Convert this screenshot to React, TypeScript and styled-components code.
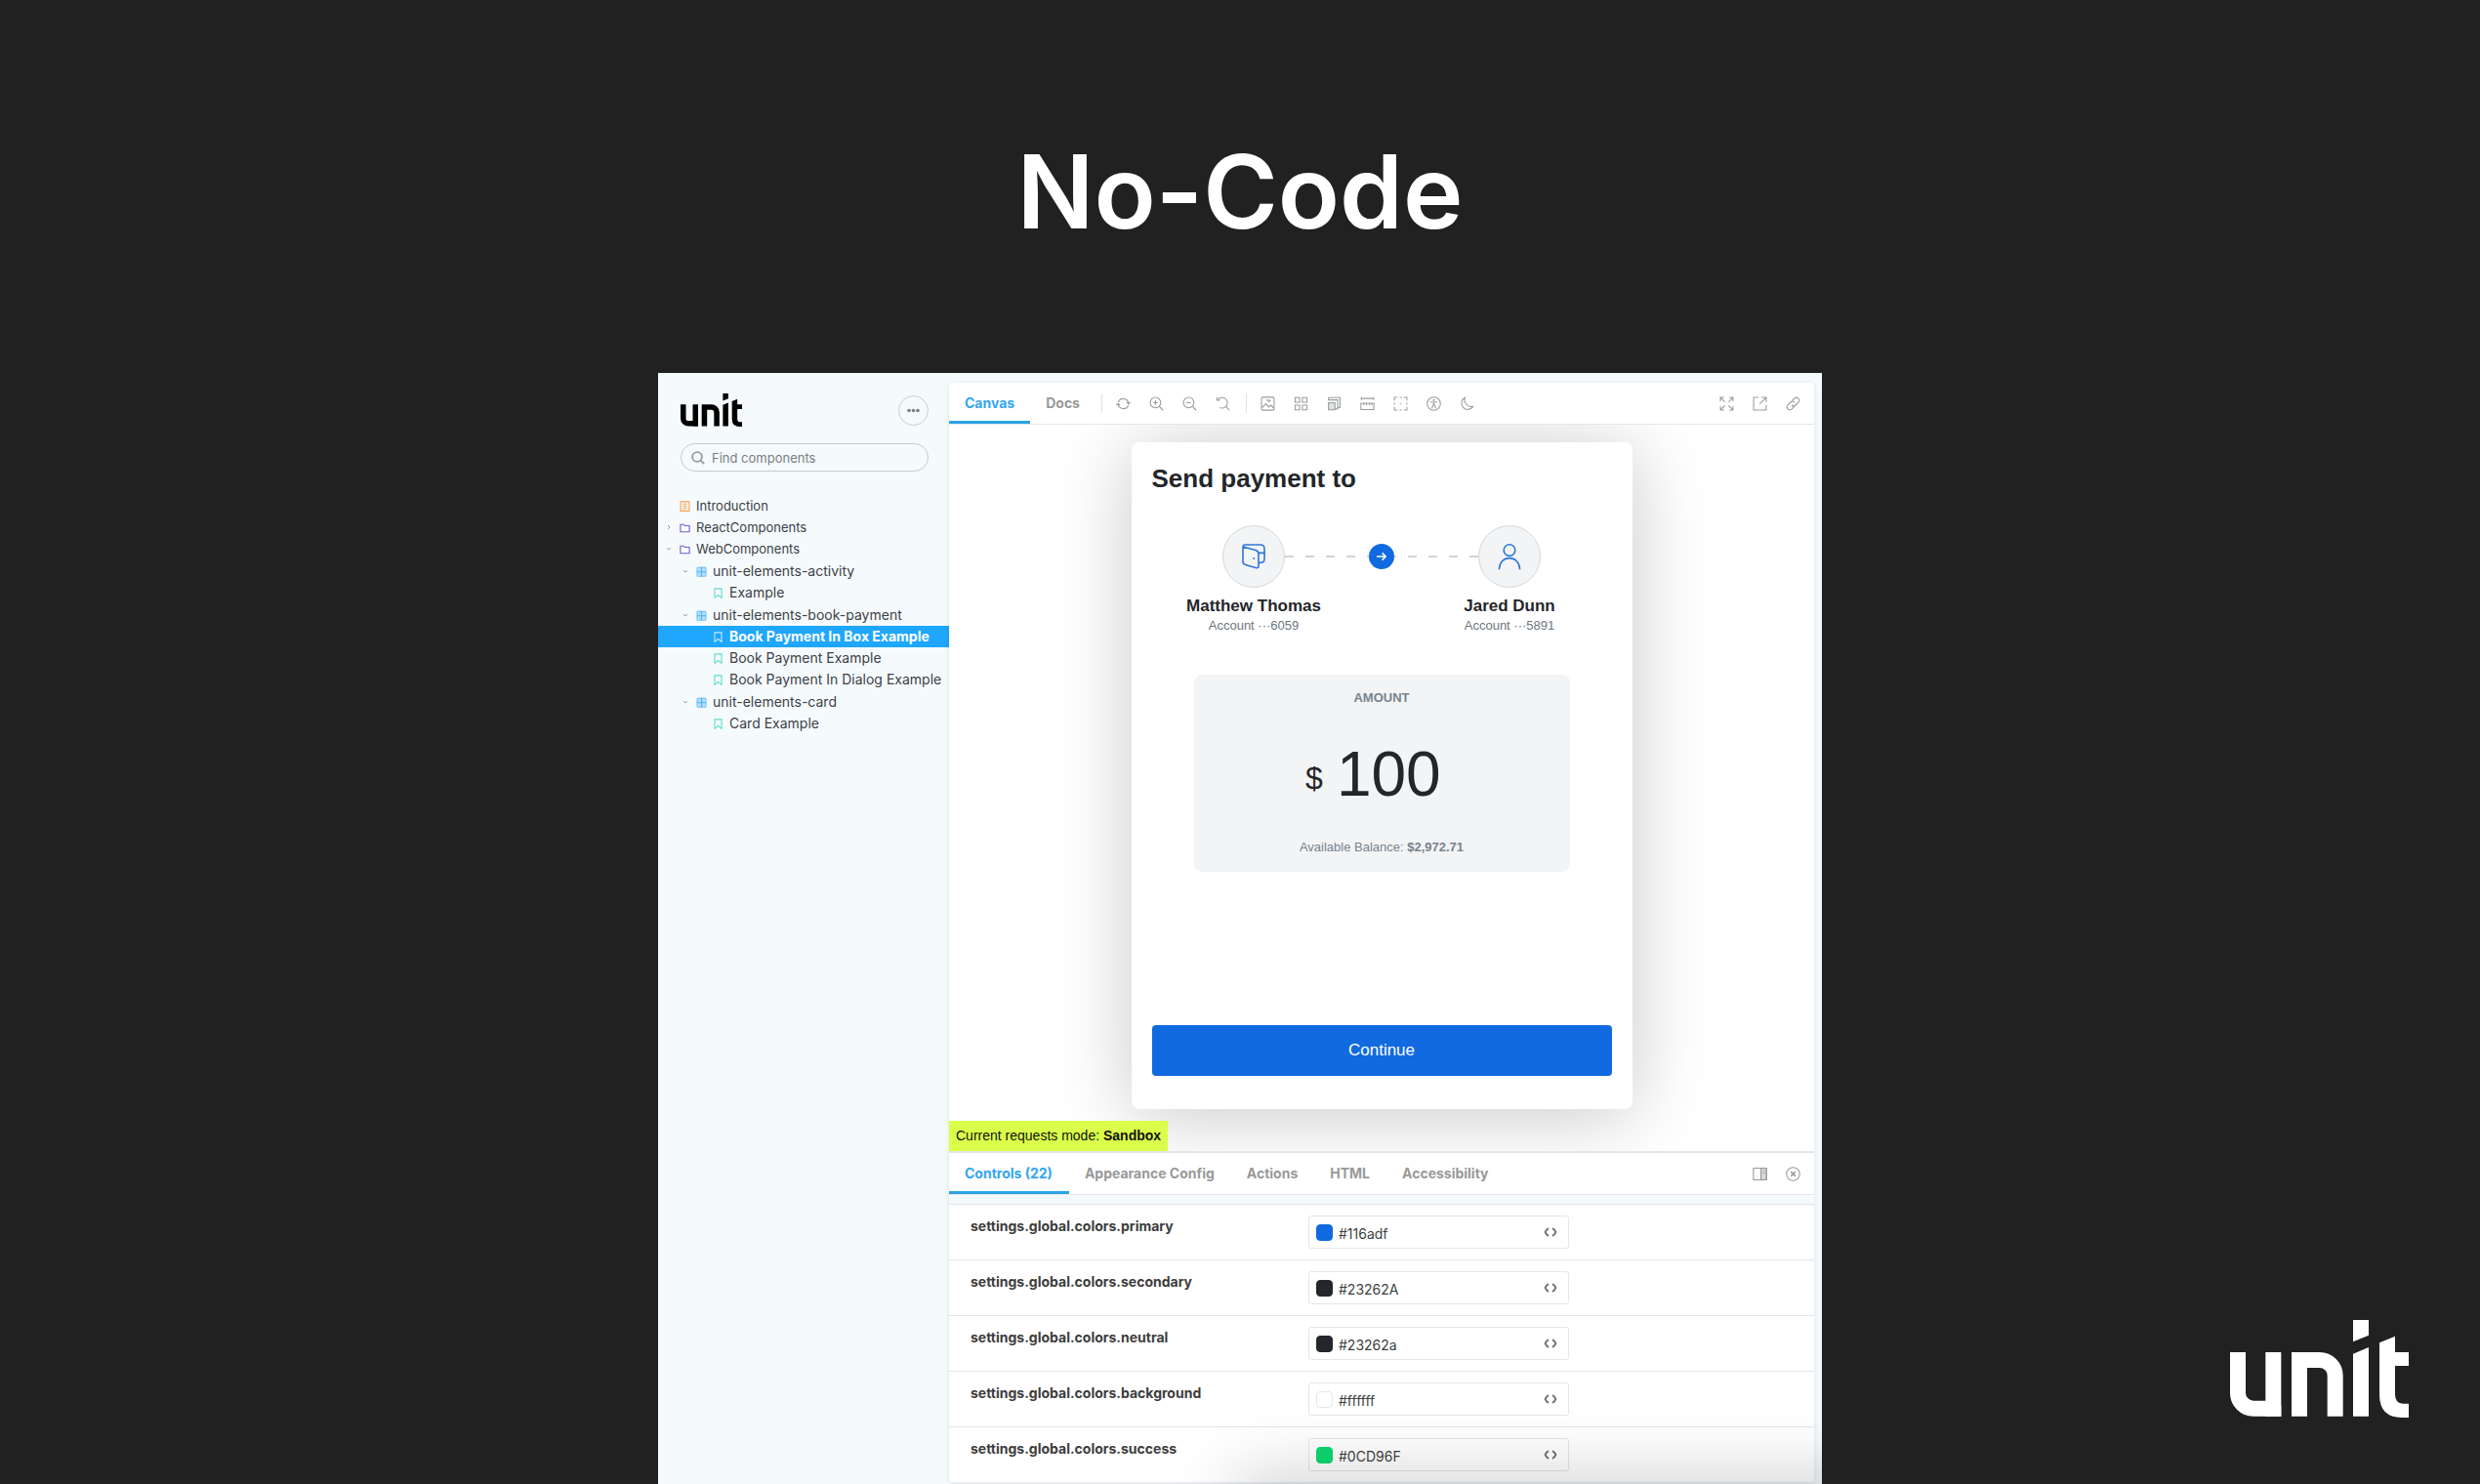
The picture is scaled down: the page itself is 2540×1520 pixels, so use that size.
import React, { useState } from "react";
import styled, { createGlobalStyle, css } from "styled-components";

const ui = `Inter, "Noto Sans", sans-serif`;
const arial = `"Liberation Sans", Arial, sans-serif`;

const Global = createGlobalStyle`
  *, *::before, *::after { box-sizing: border-box; }
  body { margin: 0; background: #212121; font-family: ${ui}; }
  button, input { font: inherit; color: inherit; margin: 0; padding: 0; border: 0; background: none; }
  button { cursor: pointer; }
  ul { list-style: none; margin: 0; padding: 0; }
  h1, h2, p { margin: 0; }
  svg { display: block; flex: none; }
`;

const Page = styled.main`
  position: relative;
  display: flex;
  flex-direction: column;
  align-items: center;
  height: 100vh;
  overflow: hidden;
  background: #212121;
`;

const Title = styled.h1`
  padding: 132px 0 122px;
  color: #fff;
  font-size: 104px;
  font-weight: 600;
  line-height: 128px;
`;

const CornerLogo = styled.div`
  position: absolute;
  right: 73px;
  bottom: 68px;
  color: #fff;
`;

const Workspace = styled.section`
  position: relative;
  display: grid;
  grid-template-columns: 298px 1fr;
  width: min(100%, 1192px);
  flex: 1;
  overflow: hidden;
  background: #f5fafd;

  &::after {
    content: "";
    position: absolute;
    top: 100%;
    left: 50%;
    right: -80px;
    height: 40px;
    box-shadow: 0 0 70px 4px rgba(0, 0, 0, 0.24);
    pointer-events: none;
  }
`;

/* ---------- sidebar ---------- */

const Sidebar = styled.aside`
  padding-top: 21px;
`;

const Brand = styled.div`
  display: flex;
  justify-content: space-between;
  align-items: center;
  padding: 0 21px 0 23px;
`;

const MoreButton = styled.button`
  display: grid;
  place-items: center;
  width: 31px;
  height: 31px;
  border: 1px solid #c9cfd3;
  border-radius: 50%;
  color: #7a7f83;
`;

const Search = styled.label`
  display: flex;
  align-items: center;
  gap: 7px;
  height: 29px;
  margin: 17px 21px 24px 23px;
  padding: 0 10px;
  border: 1px solid #c6cbcf;
  border-radius: 15px;
  color: #969a9d;
`;

const SearchInput = styled.input`
  flex: 1;
  min-width: 0;
  font-size: 13px;
  outline: 0;
  &::placeholder { color: #7a7e82; opacity: 1; }
`;

const Group = styled.ul`
  margin-top: 1px;
`;

const Node = styled.a<{ $level: number; $active?: boolean }>`
  display: grid;
  grid-template-columns: 10px 11px 1fr;
  column-gap: 4px;
  align-items: center;
  height: 22px;
  padding-left: ${(p) => 8 + p.$level * 17}px;
  color: #3c4146;
  font-size: ${(p) => (p.$level ? 14 : 13)}px;
  line-height: 22px;
  text-decoration: none;
  white-space: nowrap;
  ${(p) => p.$active && css`background: #1ea7fd; color: #fff; font-weight: 700;`}
`;

const NodeText = styled.span`
  padding-left: 2px;
`;

/* ---------- preview ---------- */

const Preview = styled.div`
  display: flex;
  flex-direction: column;
  min-width: 0;
  margin: 10px 8px 2px 0;
  border-radius: 4px;
  background: #fff;
  box-shadow: 0 1px 5px rgba(0, 0, 0, 0.1);
  overflow: hidden;
`;

const Bar = styled.div<{ $top?: boolean }>`
  display: flex;
  justify-content: space-between;
  height: ${(p) => (p.$top ? 45 : 43)}px;
  flex: none;
  border-bottom: 1px solid #e4e6e7;
  ${(p) => p.$top && css`border-top: 2px solid #e4e6e7;`}
  background: #fff;
`;

const BarSide = styled.div<{ $end?: boolean }>`
  display: flex;
  align-items: center;
  ${(p) => p.$end && css`padding-right: 5px;`}
`;

const Tab = styled.button<{ $on?: boolean; $wide?: boolean }>`
  height: 100%;
  padding: 2px ${(p) => (p.$wide ? 17 : 16)}px 0 16px;
  border-bottom: 3px solid ${(p) => (p.$on ? "#2ba3e4" : "transparent")};
  color: ${(p) => (p.$on ? "#33a6f0" : "#999")};
  font-size: 14px;
  font-weight: 700;
  white-space: nowrap;
`;

const Divider = styled.span`
  width: 1px;
  height: 20px;
  margin: 0 5px 0 6px;
  background: #dfe1e2;
`;

const Tool = styled.button`
  display: grid;
  place-items: center;
  width: 34px;
  height: 34px;
  color: #989b9d;
`;

const Canvas = styled.div`
  position: relative;
  display: flex;
  justify-content: center;
  flex: none;
  padding: 18px 16px 43px;
  overflow: hidden;
`;

const ModeBadge = styled.p`
  position: absolute;
  left: 0;
  bottom: 0;
  padding: 0 7px;
  background: #daff4a;
  color: #111;
  font: 14px / 31px ${arial};
`;

const Card = styled.form`
  width: 513px;
  padding: 22px 21px 34px;
  border-radius: 8px;
  background: #fff;
  box-shadow: 0 6px 80px rgba(0, 0, 0, 0.22);
  color: #23262a;
  font-family: ${arial};
`;

const CardTitle = styled.h2`
  font-size: 26px;
  line-height: 30px;
`;

const Route = styled.div`
  display: flex;
  justify-content: center;
  align-items: center;
  margin-top: 33px;
`;

const Avatar = styled.span`
  display: grid;
  place-items: center;
  width: 64px;
  height: 64px;
  border: 1px solid #d5d8da;
  border-radius: 50%;
  background: #f2f4f6;
  color: #2f75d6;
`;

const Connector = styled.span`
  display: flex;
  justify-content: center;
  align-items: center;
  width: 198px;
  height: 26px;
  background: repeating-linear-gradient(to right, #d2d4d6 0 9px, transparent 9px 21px) center / 100% 2px no-repeat;
`;

const Arrow = styled.span`
  display: grid;
  place-items: center;
  width: 26px;
  height: 26px;
  border-radius: 50%;
  background: #116adf;
  color: #fff;
`;

const People = styled.div`
  display: flex;
  justify-content: center;
  gap: 102px;
  margin-top: 8px;
  text-align: center;
`;

const Person = styled.div`
  width: 160px;
`;

const PersonName = styled.p`
  font-size: 17px;
  font-weight: 700;
  line-height: 22px;
`;

const Account = styled.p`
  color: #6b7680;
  font-size: 13px;
  line-height: 18px;
`;

const AmountBox = styled.div`
  display: flex;
  flex-direction: column;
  align-items: center;
  margin: 41px 43px 157px;
  padding: 16px 0 17px;
  border-radius: 8px;
  background: #f2f4f6;
  color: #78838d;
  font-size: 13px;
  line-height: 16px;
`;

const AmountLabel = styled.label`
  font-weight: 700;
`;

const AmountRow = styled.div`
  display: flex;
  align-items: center;
  gap: 14px;
  margin: 34px 0 31px;
  color: #23262a;
`;

const Currency = styled.span`
  padding-top: 8px;
  font-size: 32px;
  line-height: 36px;
`;

const AmountInput = styled.input`
  width: 124px;
  height: 72px;
  font-size: 64px;
  line-height: 72px;
  outline: 0;
`;

const Continue = styled.button`
  display: block;
  width: 100%;
  height: 52px;
  border-radius: 4px;
  background: #116adf;
  color: #fff;
  font-size: 17px;
`;

/* ---------- controls ---------- */

const Controls = styled.div`
  margin-top: 9px;
  background: #fff;
`;

const ControlsArea = styled.div`
  flex: 1;
  background: #f5fafd;
`;

const ControlRow = styled.div`
  display: grid;
  grid-template-columns: 346px 267px;
  height: 57px;
  padding: 11px 22px;
  border-top: 1px solid #e2e4e5;
`;

const ControlLabel = styled.label`
  color: #3d3d3d;
  font-size: 14px;
  font-weight: 700;
  line-height: 22px;
`;

const Field = styled.div`
  display: flex;
  align-items: center;
  height: 34px;
  padding: 0 5px 0 7px;
  border: 1px solid #e4e6e8;
  border-radius: 3px;
  color: #3c3f42;
`;

const Swatch = styled.button<{ $color: string; $light?: boolean }>`
  width: 17px;
  height: 17px;
  flex: none;
  border: 1px solid ${(p) => (p.$light ? "#e4e6e8" : p.$color)};
  border-radius: 4px;
  background: ${(p) => p.$color};
`;

const FieldInput = styled.input`
  flex: 1;
  min-width: 0;
  padding: 2px 0 0 6px;
  font-size: 14px;
  outline: 0;
`;

const CodeButton = styled.button`
  display: grid;
  place-items: center;
  width: 26px;
  height: 26px;
  color: #6f7478;
`;

/* ---------- drawings ---------- */

const Logo = ({ width, height }: { width: number; height: number }) => (
  <svg width={width} height={height} viewBox="72 66 549 300" preserveAspectRatio="none" role="img" aria-label="unit">
    <g fill="none" stroke="currentColor" strokeWidth="48">
      <path d="M96 165V290A48 48 0 0 0 144 338H205V165" />
      <path d="M205 330V362M285 362V189H347A48 48 0 0 1 395 237V362M285 165V200" />
    </g>
    <g fill="currentColor">
      <path d="M450 66h48v47l-48 20zM450 170l48-20v212h-48z" />
      <path d="M531 136l48-20v49h42v42h-42v88q0 28 24 28h18v43h-21q-69 0-69-71z" />
    </g>
  </svg>
);

const shapes: Record<string, React.ReactNode> = {
  sync: (
    <>
      <path d="M2.1 5.6A5.2 5.2 0 0 1 12.1 6.6M11.9 8.4A5.2 5.2 0 0 1 1.9 7.4" />
      <path d="M.2 8.6 1.9 6.8 3.8 8.4M10.2 5.6l1.9 1.6 1.7-1.8" />
    </>
  ),
  zoomin: <><circle cx="6" cy="6" r="5" /><path d="M9.7 9.7 13.3 13.3M6 3.8v4.4M3.8 6h4.4" /></>,
  zoomout: <><circle cx="6" cy="6" r="5" /><path d="M9.7 9.7 13.3 13.3M3.8 6h4.4" /></>,
  zoomreset: <><path d="M2.3 3.2A5 5 0 1 1 4 10.6M1.2.8v3h3M9.9 9.7l3.4 3.6" /></>,
  photo: <><rect x="1" y=".8" width="12" height="12.4" rx="1" /><path d="M1.2 11 5 7l3 3 2-1.6 2.8 2.8M5.8 4.2a1.2 1.2 0 1 1 1.8 1.4M8 5l2-1.6" /></>,
  grid: <path d="M1.3 1.2h4.4v4.4H1.3zM8.3 1.2h4.4v4.4H8.3zM1.3 8.4h4.4v4.4H1.3zM8.3 8.4h4.4v4.4H8.3z" />,
  grow: <><path d="M1.5 1.2h11v9.6h-2M1.5 3.4h8.8v8.6H8M1.5 1v3" /><path d="M1.5 6h6.2v6.8H1.5z" fill="currentColor" fillOpacity=".3" /></>,
  ruler: <><path d="M.8 2h12.4M1.2.6v2.8M12.8.6v2.8M.8 6.6h12.4v6H.8zM3.6 6.6v2M6.2 6.6v2M8.8 6.6v2M11.2 6.6v2" /></>,
  outline: <><path d="M4 1H1v3M10 1h3v3M1 10v3h3M13 10v3h-3M6 1h2M6 13h2M1 6v2M13 6v2M6.4 7h1.2" /></>,
  access: <><circle cx="7" cy="7" r="6.3" /><circle cx="7" cy="3.6" r=".5" fill="currentColor" /><path d="M3.8 5.2 7 5.8l3.2-.6M7 5.8V8M5.2 11.4 6.6 7.6M8.8 11.4 7.4 7.6" /></>,
  moon: <path d="M5 1.2A6 6 0 1 0 12.8 9.8 6.8 6.8 0 0 1 5 1.2z" />,
  expand: <path d="M1 4.6V1h3.6M1.2 1.2 5.2 5.2M9.4 1H13v3.6M12.8 1.2l-4 4M1 9.4V13h3.6M1.2 12.8l4-4M9.4 13H13V9.4M12.8 12.8l-4-4" />,
  share: <path d="M5.6 1H1v12h12V8.4M8.4 1H13v4.4M12.8 1.2 6.8 7.2" />,
  link: <><path d="M6 4.2 8.4 1.8a2.7 2.7 0 0 1 3.8 3.8L9.4 8.4a2.7 2.7 0 0 1-3.8 0" /><path d="M8 9.8 5.6 12.2a2.7 2.7 0 0 1-3.8-3.8L4.6 5.6a2.7 2.7 0 0 1 3.8 0" /></>,
  panel: <><rect x=".8" y="1.4" width="12.4" height="11.2" /><path d="M8 1.4v11.2M10 4h1.6M10 6h1.6" /><path d="M8 1.4h5.2v11.2H8z" fill="currentColor" fillOpacity=".35" /></>,
  close: <><circle cx="7" cy="7" r="6.3" /><path d="M4.8 4.8l4.4 4.4M9.2 4.8 4.8 9.2" strokeWidth="1.4" /></>,
};

const Icon = ({ name, size = 15 }: { name: string; size?: number }) => (
  <svg width={size} height={size} viewBox="0 0 14 14" fill="none" stroke="currentColor" strokeWidth="1" aria-hidden="true">
    {shapes[name]}
  </svg>
);

const kinds: Record<string, { color: string; art: React.ReactNode }> = {
  doc: { color: "#f9a24c", art: <path d="M1 .8h8v8.6H1zM3 3h4M3 5h4M3 7h4" /> },
  folder: { color: "#7a5cc4", art: <path d="M.8 8.8V2h3l1 1.2h4.4v5.6z" /> },
  component: { color: "#4fb4f5", art: <><rect x=".8" y="1" width="8.4" height="8.4" rx="1" fill="currentColor" fillOpacity=".4" strokeOpacity=".6" /><path d="M5 1v8.4M.8 5.2h8.4" /></> },
  story: { color: "#5fdccb", art: <path d="M1.8.8h6.4v8.6L5 6.8 1.8 9.4z" /> },
};

const KindIcon = ({ kind, active }: { kind: string; active?: boolean }) => (
  <svg width="11" height="11" viewBox="0 0 10 10" fill="none" stroke="currentColor" color={active ? "#c4ecff" : kinds[kind].color} aria-hidden="true">
    {kinds[kind].art}
  </svg>
);

const Chevron = ({ open }: { open?: boolean }) => (
  <svg width="6" height="6" viewBox="0 0 6 6" fill="none" stroke="#9aa0a4" aria-hidden="true">
    <path d={open ? "M1 2.2 3 4 5 2.2" : "M2 1l2 2-2 2"} />
  </svg>
);

type Item = { label: string; kind: string; open?: boolean; closed?: boolean; active?: boolean };

const TreeNode = ({ item, level }: { item: Item; level: number }) => (
  <li>
    <Node href="#" $level={level} $active={item.active}>
      {item.open || item.closed ? <Chevron open={item.open} /> : <span />}
      <KindIcon kind={item.kind} active={item.active} />
      <NodeText>{item.label}</NodeText>
    </Node>
  </li>
);

const roots: Item[] = [
  { label: "Introduction", kind: "doc" },
  { label: "ReactComponents", kind: "folder", closed: true },
  { label: "WebComponents", kind: "folder", open: true },
];

const groups: { name: string; stories: string[] }[] = [
  { name: "unit-elements-activity", stories: ["Example"] },
  { name: "unit-elements-book-payment", stories: ["Book Payment In Box Example", "Book Payment Example", "Book Payment In Dialog Example"] },
  { name: "unit-elements-card", stories: ["Card Example"] },
];

const toolsA = [["sync", "Remount"], ["zoomin", "Zoom in"], ["zoomout", "Zoom out"], ["zoomreset", "Reset zoom"]];
const toolsB = [
  ["photo", "Background"], ["grid", "Grid"], ["grow", "Viewport"], ["ruler", "Measure"],
  ["outline", "Outline"], ["access", "Vision simulator"], ["moon", "Dark mode"],
];
const toolsC = [["expand", "Full screen"], ["share", "Open in new tab"], ["link", "Copy link"]];

const Tools = ({ list }: { list: string[][] }) => (
  <>
    {list.map(([name, title]) => (
      <Tool key={name} type="button" aria-label={title}>
        <Icon name={name} />
      </Tool>
    ))}
  </>
);

const colors = [
  ["primary", "#116adf"],
  ["secondary", "#23262A"],
  ["neutral", "#23262a"],
  ["background", "#ffffff"],
  ["success", "#0CD96F"],
];

const ColorControl = ({ name, initial }: { name: string; initial: string }) => {
  const [value, setValue] = useState(initial);
  const id = `color-${name}`;
  return (
    <ControlRow>
      <ControlLabel htmlFor={id}>settings.global.colors.{name}</ControlLabel>
      <Field>
        <Swatch type="button" aria-label={`Pick ${name}`} $color={value} $light={value === "#ffffff"} />
        <FieldInput id={id} value={value} onChange={(e) => setValue(e.target.value)} />
        <CodeButton type="button" aria-label="Switch format">
          <svg width="14" height="10" viewBox="0 0 14 10" fill="none" stroke="currentColor" strokeWidth="2">
            <path d="M5 1.2Q2.4 2.6 1.6 5 2.4 7.4 5 8.8M9 1.2Q11.6 2.6 12.4 5 11.6 7.4 9 8.8" />
          </svg>
        </CodeButton>
      </Field>
    </ControlRow>
  );
};

export default function App() {
  const [amount, setAmount] = useState("100");
  return (
    <>
      <Global />
      <Page>
        <Title>No-Code</Title>
        <Workspace>
          <Sidebar>
            <Brand>
              <Logo width={63} height={34} />
              <MoreButton type="button" aria-label="Menu">
                <svg width="13" height="5" viewBox="0 0 13 5" fill="currentColor">
                  <circle cx="2" cy="2.5" r="1.8" /><circle cx="6.5" cy="2.5" r="1.8" /><circle cx="11" cy="2.5" r="1.8" />
                </svg>
              </MoreButton>
            </Brand>
            <Search>
              <svg width="14" height="14" viewBox="0 0 14 14" fill="none" stroke="currentColor" strokeWidth="1.8">
                <circle cx="6" cy="6" r="4.9" /><path d="M9.6 9.6 13.2 13" />
              </svg>
              <SearchInput placeholder="Find components" aria-label="Find components" />
            </Search>
            <nav>
              <ul>{roots.map((r) => <TreeNode key={r.label} item={r} level={0} />)}</ul>
              {groups.map((g) => (
                <Group key={g.name}>
                  <TreeNode item={{ label: g.name, kind: "component", open: true }} level={1} />
                  {g.stories.map((s) => (
                    <TreeNode key={s} item={{ label: s, kind: "story", active: s === "Book Payment In Box Example" }} level={2} />
                  ))}
                </Group>
              ))}
            </nav>
          </Sidebar>

          <Preview>
            <Bar>
              <BarSide>
                <Tab type="button" $on>Canvas</Tab>
                <Tab type="button">Docs</Tab>
                <Divider />
                <Tools list={toolsA} />
                <Divider />
                <Tools list={toolsB} />
              </BarSide>
              <BarSide $end><Tools list={toolsC} /></BarSide>
            </Bar>

            <Canvas>
              <Card onSubmit={(e) => e.preventDefault()}>
                <CardTitle>Send payment to</CardTitle>
                <Route>
                  <Avatar>
                    <svg width="26" height="28" viewBox="0 0 26 28" fill="none" stroke="currentColor" strokeWidth="1.6" strokeLinejoin="round" strokeLinecap="round">
                      <path d="M2 4 15 7.4Q18 8.4 18 11.4V23.4Q18 26.4 15 25.6L4.6 22.4Q2 21.6 2 19V4.6Q2 2 4.6 2H20Q24 2 24 6V17Q24 20.4 18.4 20.4" />
                      <path d="M18 10.4H24" /><circle cx="13.2" cy="16" r="1" fill="currentColor" stroke="none" />
                    </svg>
                  </Avatar>
                  <Connector>
                    <Arrow>
                      <svg width="12" height="10" viewBox="0 0 12 10" fill="none" stroke="currentColor" strokeWidth="1.5">
                        <path d="M1 5h9M6.6 1.4 10.2 5 6.6 8.6" />
                      </svg>
                    </Arrow>
                  </Connector>
                  <Avatar>
                    <svg width="26" height="28" viewBox="0 0 26 28" fill="none" stroke="currentColor" strokeWidth="1.6" strokeLinecap="round">
                      <circle cx="13" cy="7.6" r="5.8" /><path d="M2.4 26.6C3 19.6 7.4 15.6 13 15.6S23 19.6 23.6 26.6" />
                    </svg>
                  </Avatar>
                </Route>
                <People>
                  <Person>
                    <PersonName>Matthew Thomas</PersonName>
                    <Account>Account ···6059</Account>
                  </Person>
                  <Person>
                    <PersonName>Jared Dunn</PersonName>
                    <Account>Account ···5891</Account>
                  </Person>
                </People>
                <AmountBox>
                  <AmountLabel htmlFor="amount">AMOUNT</AmountLabel>
                  <AmountRow>
                    <Currency>$</Currency>
                    <AmountInput id="amount" value={amount} onChange={(e) => setAmount(e.target.value)} />
                  </AmountRow>
                  <p>Available Balance: <b>$2,972.71</b></p>
                </AmountBox>
                <Continue type="submit">Continue</Continue>
              </Card>
              <ModeBadge>Current requests mode: <b>Sandbox</b></ModeBadge>
            </Canvas>

            <Bar $top>
              <BarSide>
                <Tab type="button" $wide $on>Controls (22)</Tab>
                <Tab type="button" $wide>Appearance Config</Tab>
                <Tab type="button" $wide>Actions</Tab>
                <Tab type="button" $wide>HTML</Tab>
                <Tab type="button" $wide>Accessibility</Tab>
              </BarSide>
              <BarSide $end><Tools list={[["panel", "Change orientation"], ["close", "Hide addons"]]} /></BarSide>
            </Bar>
            <ControlsArea>
              <Controls>
                {colors.map(([name, value]) => <ColorControl key={name} name={name} initial={value} />)}
              </Controls>
            </ControlsArea>
          </Preview>
        </Workspace>
        <CornerLogo><Logo width={183} height={100} /></CornerLogo>
      </Page>
    </>
  );
}
